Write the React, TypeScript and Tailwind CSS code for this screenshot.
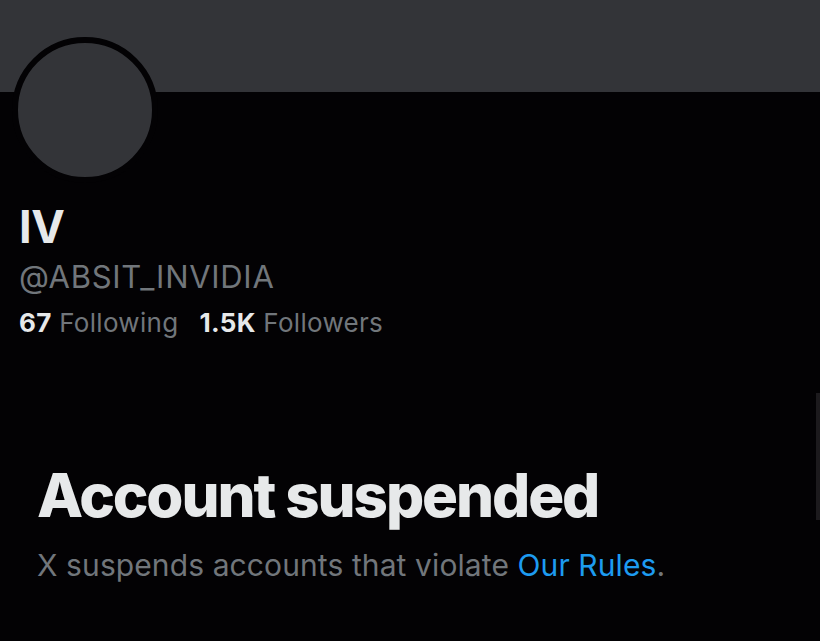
import React from 'react';

export default function App() {
  return (
    <div
      className="relative w-[820px] h-[641px] overflow-hidden bg-[#030204] text-[#e7e9ea]"
      style={{ fontFamily: 'Inter, "Noto Sans", sans-serif' }}
    >
      <div className="h-[92px] bg-[#333438]" />

      <div className="px-[19px]">
        <div className="-mt-[55px] -ml-[7px] w-[146px] h-[146px] rounded-full border-[6px] border-[#030204] bg-[#333438]" />

        <h1 className="mt-[18px] text-[45px] leading-[52px] font-bold tracking-[-0.5px]">IV</h1>
        <div className="mt-[6px] text-[31px] leading-[36px] text-[#71767b] tracking-[0.7px]">@ABSIT_INVIDIA</div>
        <div className="mt-[12px] flex items-baseline gap-[21px] text-[26px] leading-[32px] tracking-[0.3px]">
          <span>
            <span className="font-bold text-[#e7e9ea]">67</span>
            <span className="text-[#71767b]"> Following</span>
          </span>
          <span>
            <span className="font-bold text-[#e7e9ea]">1.5K</span>
            <span className="text-[#71767b]"> Followers</span>
          </span>
        </div>
      </div>

      <div className="mt-[121px] px-[37px]">
        <h2 className="text-[60px] leading-[70px] font-extrabold tracking-[-2.1px]">Account suspended</h2>
        <p className="mt-[15px] text-[30px] leading-[40px] text-[#71767b] tracking-[0.1px]">
          X suspends accounts that violate <span className="text-[#1d9bf0]">Our Rules</span>.
        </p>
      </div>

      <div className="absolute right-0 top-[393px] w-[4px] h-[127px] bg-[#1c1a1d]" />
    </div>
  );
}
